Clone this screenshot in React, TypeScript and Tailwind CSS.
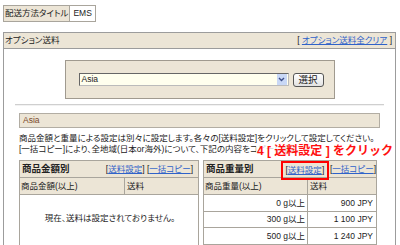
import React from "react";

const beige = "bg-[#ece5d6]";

function Link({ children }: { children: React.ReactNode }) {
  return <span className="text-[#2f62c9] underline">{children}</span>;
}

function SelectArrow() {
  return (
    <span className="flex h-[11px] w-[10px] items-center justify-center bg-[#c9d8f6]">
      <svg width="7" height="5" viewBox="0 0 7 5">
        <path d="M1 1 L3.5 3.5 L6 1" stroke="#3c4f8a" strokeWidth="1.4" fill="none" />
      </svg>
    </span>
  );
}

const weightRows = [
  ["0 g以上", "900 JPY"],
  ["300 g以上", "1 100 JPY"],
  ["500 g以上", "1 240 JPY"],
  ["", ""],
];

export default function App() {
  return (
    <div className="h-[245px] w-[400px] overflow-hidden bg-white pt-[5px] font-['Liberation_Sans','Noto_Sans_CJK_JP',sans-serif] text-[8.5px] leading-none text-[#222] [font-feature-settings:'palt']">
      {/* tab row */}
      <div className="ml-[3px] flex h-[17px] w-max border border-[#a9a59c]">
        <div className={`${beige} flex items-center border-r border-[#a9a59c] px-[1px]`}>配送方法タイトル</div>
        <div className="flex items-center px-[3px]">EMS</div>
      </div>

      {/* option panel */}
      <div className="ml-[3px] mt-[10px] h-[220px] w-[393px] border-x border-t border-[#9c9c9c]">
        <div className={`${beige} flex h-[16px] items-center justify-between border-b border-[#9c9c9c] px-[1px]`}>
          <span>オプション送料</span>
          <span className="pr-[2px]">
            [ <Link>オプション送料全クリア</Link> ]
          </span>
        </div>

        <div className={`${beige} mx-auto mt-[11px] flex h-[39px] w-[270px] items-center gap-[4px] border border-[#a09a8f] pl-[13px]`}>
          <div className="flex h-[13px] w-[210px] items-center justify-between border border-[#bbb] border-l-[#666] border-t-[#666] bg-[#ffffee] pl-[2px] pr-[1px]">
            <span>Asia</span>
            <SelectArrow />
          </div>
          <button className="flex h-[14px] w-[31px] items-center justify-center rounded-[3px] border border-[#555] bg-gradient-to-b from-white to-[#e2e2e2] text-[9.5px]">
            選択
          </button>
        </div>

        <div className="mx-[11px] mt-[5px] h-[2px] border-t border-[#cfcfcf] bg-[#f2f2f2]" />

        <div className="mx-[15px] mt-[7px]">
          <div className={`${beige} flex h-[15px] items-center border border-[#b2ada3] px-[3px] text-[#7b4a2b]`}>Asia</div>

          <div className="relative mt-[5px] leading-[11px]">
            <p className="whitespace-nowrap">商品金額と重量による設定は別々に設定します。各々の[送料設定]をクリックして設定してください。</p>
            <p className="whitespace-nowrap">[一括コピー]により、全地域(日本or海外)について、下記の内容をコピーします。</p>
            <span className="absolute left-[237px] top-[11px] whitespace-nowrap bg-white/80 pl-[1px] text-[12px] font-bold leading-[14px] text-[#ff1010] [font-feature-settings:normal]">
              4 [ 送料設定 ] をクリック
            </span>
          </div>

          <div className="mt-[5px] flex gap-[4px]">
            {/* price table */}
            <div className="w-[180px] border border-[#a9a59c]">
              <div className={`${beige} flex h-[17px] items-center justify-between border-b border-[#a9a59c] pl-[2px] pr-[5px]`}>
                <span className="text-[9.5px] font-bold">商品金額別</span>
                <span className="whitespace-nowrap">
                  [<Link>送料設定</Link>] [<Link>一括コピー</Link>]
                </span>
              </div>
              <div className={`${beige} flex h-[17px] border-b border-[#a9a59c]`}>
                <div className="flex w-[105px] items-center border-r border-[#a9a59c] pl-[1px]">商品金額(以上)</div>
                <div className="flex items-center pl-[2px]">送料</div>
              </div>
              <div className="flex h-[46px] items-center justify-center pl-[2px]">現在、送料は設定されておりません。</div>
            </div>

            {/* weight table */}
            <div className="h-[90px] w-[174px] border border-[#a9a59c]">
              <div className={`${beige} flex h-[17px] items-center justify-between border-b border-[#a9a59c] pl-[2px]`}>
                <span className="text-[9.5px] font-bold">商品重量別</span>
                <span className="flex items-center whitespace-nowrap">
                  <span className="relative z-10 -mt-[1px] mb-[-3px] flex h-[19px] w-[48px] items-center justify-center border-2 border-[#ff0000]">
                    <span>
                      [<Link>送料設定</Link>]
                    </span>
                  </span>
                  <span className="ml-[1px]">
                    [<Link>一括コピー</Link>]
                  </span>
                </span>
              </div>
              <div className={`${beige} flex h-[17px] border-b border-[#a9a59c]`}>
                <div className="flex w-[104px] items-center border-r border-[#a9a59c] pl-[1px]">商品重量(以上)</div>
                <div className="flex items-center pl-[2px]">送料</div>
              </div>
              {weightRows.map(([w, p], i) => (
                <div key={i} className="flex h-[16.5px] border-b border-[#a9a59c]">
                  <div className="flex w-[104px] items-center justify-end border-r border-[#a9a59c] pr-[2px]">{w}</div>
                  <div className="flex flex-1 items-center justify-end pr-[3px]">{p}</div>
                </div>
              ))}
            </div>
          </div>
        </div>
      </div>
    </div>
  );
}
